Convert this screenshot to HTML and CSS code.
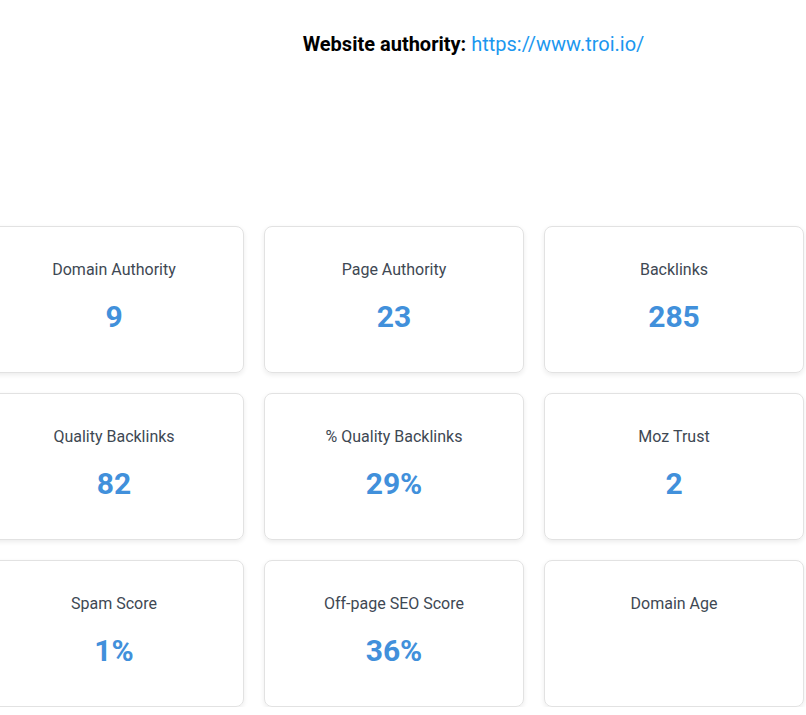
FILE: index.html
```html
<!DOCTYPE html>
<html lang="en">

<head>
  <meta charset="UTF-8">
  <meta name="viewport" content="width=device-width, initial-scale=1.0">
  <title>Website authority</title>
  <link rel="stylesheet" href="styles.css">
</head>

<body>
  <div class="page">
    <h2 class="site-title">Website authority: <a href="https://www.troi.io/">https://www.troi.io/</a></h2>
    <div class="stats">
      <div class="stat-card">
        <div class="stat-label">Domain Authority</div>
        <div class="stat-value">9</div>
      </div>
      <div class="stat-card">
        <div class="stat-label">Page Authority</div>
        <div class="stat-value">23</div>
      </div>
      <div class="stat-card">
        <div class="stat-label">Backlinks</div>
        <div class="stat-value">285</div>
      </div>
      <div class="stat-card">
        <div class="stat-label">Quality Backlinks</div>
        <div class="stat-value">82</div>
      </div>
      <div class="stat-card">
        <div class="stat-label">% Quality Backlinks</div>
        <div class="stat-value">29%</div>
      </div>
      <div class="stat-card">
        <div class="stat-label">Moz Trust</div>
        <div class="stat-value">2</div>
      </div>
      <div class="stat-card">
        <div class="stat-label">Spam Score</div>
        <div class="stat-value">1%</div>
      </div>
      <div class="stat-card">
        <div class="stat-label">Off-page SEO Score</div>
        <div class="stat-value">36%</div>
      </div>
      <div class="stat-card">
        <div class="stat-label">Domain Age</div>
        <div class="stat-value"></div>
      </div>
    </div>
  </div>
</body>

</html>
```

FILE: styles.css
```css
body {
  margin: 0;
  font-family: Roboto, "Liberation Sans", sans-serif;
  background: #fff;
  overflow: hidden;
}

.page {
  padding-top: 30px;
}

.site-title {
  margin: 0;
  padding-left: 141px;
  text-align: center;
  font-size: 20px;
  line-height: 28px;
  font-weight: 700;
  color: #000;
}

.site-title a {
  color: #1b97ef;
  font-weight: 400;
  text-decoration: none;
}

.stats {
  display: grid;
  grid-template-columns: repeat(3, 260px);
  gap: 20px;
  margin: 168px 0 0 -16px;
}

.stat-card {
  height: 147px;
  box-sizing: border-box;
  padding-top: 31px;
  border: 1px solid #e2e2e2;
  border-radius: 8px;
  box-shadow: 0 2px 5px rgba(0, 0, 0, 0.08);
  text-align: center;
}

.stat-label {
  font-size: 16px;
  line-height: 24px;
  color: #3e4853;
}

.stat-value {
  margin-top: 18px;
  font-size: 30px;
  line-height: 34px;
  font-weight: 700;
  color: #4190db;
}
```
